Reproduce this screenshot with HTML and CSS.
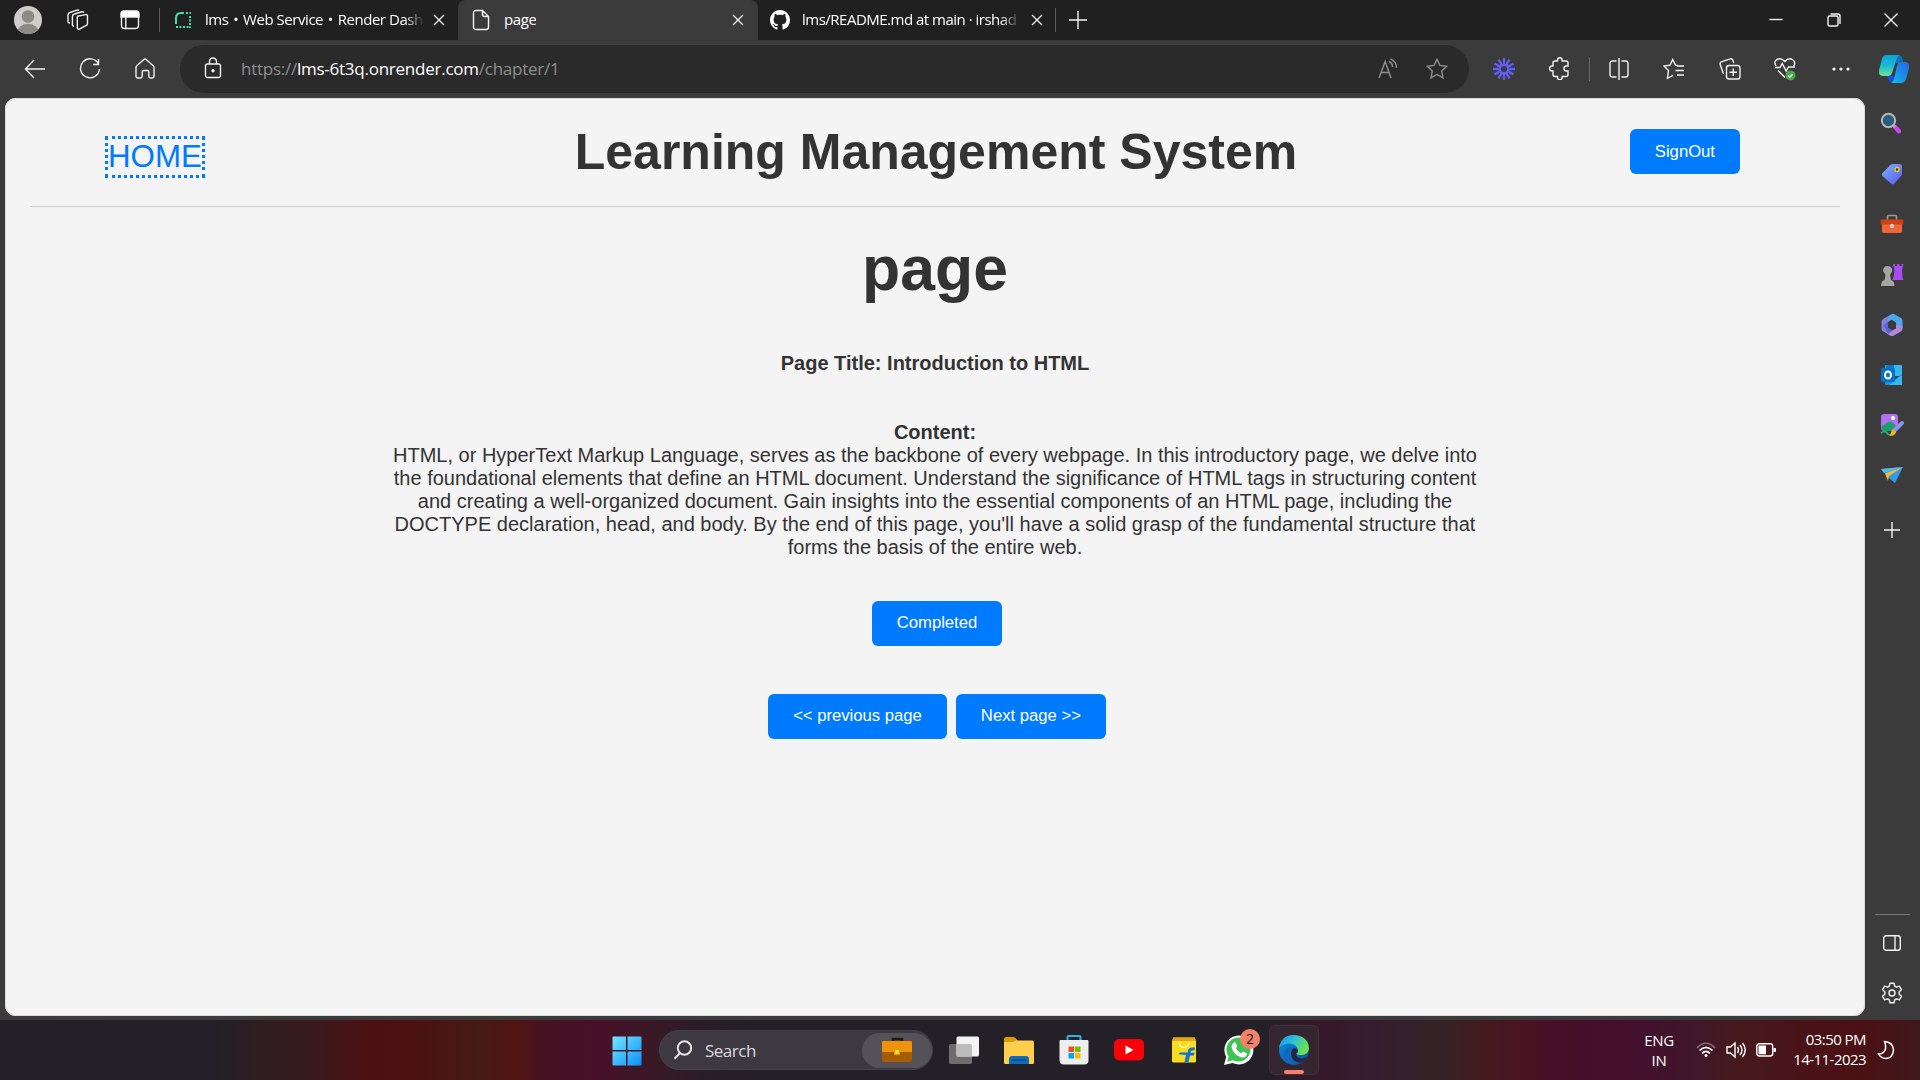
FILE: index.html
```html
<!DOCTYPE html>
<html lang="en">
<head>
<meta charset="utf-8">
<title>page</title>
<link rel="stylesheet" href="styles.css">
</head>
<body>
<div class="desktop">

<header class="tabstrip">
  <div class="slot avatar-slot"><svg width="28" height="28" viewBox="0 0 28 28"><defs><clipPath id="av"><circle cx="14" cy="14" r="14"/></clipPath></defs><g clip-path="url(#av)"><rect width="28" height="28" fill="#cfcdc9"/><circle cx="14" cy="10.5" r="6.3" fill="#8d8a86"/><ellipse cx="14" cy="26" rx="10.5" ry="8.2" fill="#8d8a86"/></g></svg></div>
  <div class="slot spaces-slot"><svg width="22" height="22" viewBox="0 0 22 22" class="line"><path d="M10.5 7.2l8-1.600q2-.3 2 1.600v7.500q0 1.200-1.200 1.700l-7 3.600q-2 .8-2-1.400V8.500q0-1 .2-1.300z"/><path d="M7 17q-1.600.3-1.600-1.300V7.500q0-2 2-2.500l7.500-2.200q1.500-.3 2 .8"/><path d="M3 14q-2 .3-2-1.500V6q0-2 2-2.500L10 1.200q1.500-.4 2 .3"/></svg></div>
  <div class="slot menu-slot"><svg width="20" height="20" viewBox="0 0 20 20" class="line"><rect x="1.500" y="1.500" width="17" height="17" rx="3"/><path d="M1 7V4q0-3 3-3h12q3 0 3 3v3z" fill="#fff"/><path d="M5.800 7v11"/></svg></div>
  <i class="tab-rule"></i>
  <div class="tab tab-render">
    <svg width="16" height="16" viewBox="0 0 16 16" fill="none" stroke="#3fe0b4" stroke-width="2"><path d="M1 12V6Q1 1 6 1h3"/><path d="M11 1h5M15 4v12M1 15h14" stroke-dasharray="2 1.500"/></svg>
    <span class="tab-title fade">lms・Web Service・Render Dash</span>
    <svg class="close" width="12" height="12" viewBox="0 0 12 12"><path d="M1 1l10 10M11 1L1 11"/></svg>
  </div>
  <div class="tab tab-page">
    <svg width="18" height="22" viewBox="0 0 18 22" class="line"><path d="M4 1.500h6.500L16.500 7.500V18q0 2.500-2.500 2.500H4q-2.500 0-2.500-2.500V4Q1.500 1.500 4 1.500zM10.500 1.500V5.500q0 2 2 2h4"/></svg>
    <span class="tab-title">page</span>
    <svg class="close" width="12" height="12" viewBox="0 0 12 12"><path d="M1 1l10 10M11 1L1 11"/></svg>
  </div>
  <div class="tab tab-git">
    <svg width="20" height="20" viewBox="0 0 16 16" fill="#fff"><path d="M8 0C3.580 0 0 3.580 0 8c0 3.540 2.290 6.530 5.470 7.590.4.070.55-.17.55-.38 0-.19-.01-.82-.01-1.490-2.010.37-2.530-.49-2.690-.94-.09-.23-.48-.94-.82-1.130-.28-.15-.68-.52-.01-.53.63-.01 1.080.58 1.230.82.72 1.210 1.870.87 2.330.66.070-.52.28-.87.51-1.070-1.780-.2-3.640-.89-3.640-3.950 0-.87.31-1.590.82-2.150-.08-.2-.36-1.020.08-2.120 0 0 .67-.21 2.200.82.64-.18 1.320-.27 2-.27s1.360.09 2 .27c1.530-1.040 2.200-.82 2.200-.82.44 1.100.16 1.920.08 2.120.51.56.82 1.270.82 2.150 0 3.070-1.870 3.750-3.650 3.950.29.25.54.73.54 1.480 0 1.070-.01 1.930-.01 2.200 0 .21.15.46.55.38A8.010 8.010 0 0 0 16 8c0-4.420-3.580-8-8-8z"/></svg>
    <span class="tab-title fade">lms/README.md at main · irshad</span>
    <svg class="close" width="12" height="12" viewBox="0 0 12 12"><path d="M1 1l10 10M11 1L1 11"/></svg>
  </div>
  <i class="tab-rule"></i>
  <svg class="new-tab line" width="18" height="18" viewBox="0 0 18 18"><path d="M9 0v18M0 9h18"/></svg>
  <div class="window-buttons">
    <div class="slot"><svg width="14" height="14" viewBox="0 0 14 14" class="line"><path d="M.5 6.500h13"/></svg></div>
    <div class="slot"><svg width="14" height="14" viewBox="0 0 14 14" class="line"><rect x="1" y="3" width="10" height="10" rx="1.500"/><path d="M3.500 1H11q2 0 2 2v8"/></svg></div>
    <div class="slot"><svg width="14" height="14" viewBox="0 0 14 14" class="line"><path d="M.5.5l13 13M13.500.5l-13 13"/></svg></div>
  </div>
</header>

<div class="toolbar">
  <div class="nav">
    <div class="slot"><svg width="22" height="20" viewBox="0 0 22 20" class="line"><path d="M10 1L1.500 10l8.500 9M1.500 10H21"/></svg></div>
    <div class="slot"><svg width="22" height="22" viewBox="0 0 22 22" class="line"><path d="M19.500 6A9.500 9.500 0 1 0 20.500 11M19.500 1v5.500H14"/></svg></div>
    <div class="slot"><svg width="20" height="21" viewBox="0 0 20 21" class="line"><path d="M1 9.500q0-1 .8-1.700l7-6.300q1.200-1 2.400 0l7 6.300q.8.700.8 1.700V18q0 2-2 2h-1.500q-1.700 0-1.700-1.700V14q0-1.500-1.500-1.500H8.700Q7.200 12.500 7.200 14v4.300Q7.200 20 5.500 20H3q-2 0-2-2z"/></svg></div>
  </div>
  <div class="address">
    <svg width="18" height="22" viewBox="0 0 18 22" class="line"><rect x="1.500" y="7" width="15" height="13.500" rx="2"/><path d="M5.500 7V4.500a3.500 3.500 0 0 1 7 0V7"/><circle cx="9" cy="13.700" r="1" fill="#fff"/></svg>
    <span class="url"><span class="url-scheme">https://</span><b>lms-6t3q.onrender.com</b><span class="url-path">/chapter/1</span></span>
    <svg class="dim" width="20" height="22" viewBox="0 0 20 22"><path d="M1 20L7.200 3.500 13 20M3.200 14.500h8M11 3.500q3.500 1.500 3.500 5.500M12.500.8q6 2.500 6 9"/></svg>
    <svg class="dim star" width="22" height="22" viewBox="0 0 22 22"><path d="M11 1.200l2.900 6.200 6.800.9-5 4.700 1.300 6.900-6-3.400-6 3.400 1.300-6.900-5-4.700 6.800-.9z"/></svg>
  </div>
  <div class="tools">
    <div class="slot"><svg width="22" height="22" viewBox="-11 -11 22 22" stroke="#625df5" stroke-width="2.300"><path d="M0-4v-7M0 4v7M-4 0h-7M4 0h7M2-3.500l3.500-6M-2-3.500l-3.500-6M2 3.500l3.500 6M-2 3.500l-3.500 6M3.500-2l6-3.500M-3.500-2l-6-3.500M3.500 2l6 3.500M-3.500 2l-6 3.500"/><circle r="4.200" fill="none"/></svg></div>
    <div class="slot"><svg width="21" height="23" viewBox="0 0 21 23" class="line"><path d="M4 6q0-2 2-2h2.500V3a2.300 2.300 0 0 1 4.600 0v1H17q2 0 2 2v3h-1.500a2.400 2.400 0 0 0 0 5H19v3.500q0 2-2 2h-3.900v1a2.300 2.300 0 0 1-4.600 0v-1H6q-2 0-2-2V14H3a2.300 2.300 0 0 1 0-5h1z"/></svg></div>
    <i class="tool-rule"></i>
    <div class="slot"><svg width="20" height="22" viewBox="0 0 20 22" class="line"><path d="M7.500 3H3.500Q1 3 1 5.500v11Q1 19 3.500 19h4M12.500 3h4Q19 3 19 5.500v11q0 2.500-2.500 2.500h-4M10 0v22"/></svg></div>
    <div class="slot"><svg width="22" height="22" viewBox="0 0 22 22" class="line"><path d="M14.500 7.500l-2-.4L9.700 1.500 7 7.100l-6 .9 4.500 4.500-1.100 7.800 5.600-3M14 8h7M12.500 12.500H21M14 17h7"/></svg></div>
    <div class="slot"><svg width="22" height="22" viewBox="0 0 22 22" class="line"><rect x="7.500" y="7.500" width="13.500" height="13.500" rx="2.500"/><path d="M14.200 10.500v7.500M10.500 14.200H18M4.500 16L1.200 6.500Q.7 4.300 2.700 3.600L11.300.9q2-.4 2.700 1.500l.8 2.600"/></svg></div>
    <div class="slot"><svg width="22" height="24" viewBox="0 0 22 24" class="line"><path d="M2 9Q-.5 5 2.500 2.800 6.800.2 10.800 4.500q4-4.300 8-1.700 3.200 2.500 1 6.200M4 13.500l7 7M1 10.500h5l2.200-4 4 7.500 2.300-4h6.500"/><circle cx="16.500" cy="18.500" r="5" fill="#45a849" stroke="none"/><path d="M14.300 18.700l1.500 1.500 2.800-3"/></svg></div>
    <div class="slot"><svg width="18" height="4" viewBox="0 0 18 4" fill="#fff"><circle cx="2" cy="2" r="1.600"/><circle cx="9" cy="2" r="1.600"/><circle cx="16" cy="2" r="1.600"/></svg></div>
    <div class="slot copilot"><svg width="30" height="28" viewBox="0 0 30 28"><defs><linearGradient id="c1" x2="0" y2="1"><stop stop-color="#0ba2df"/><stop offset=".5" stop-color="#19b8d3"/><stop offset="1" stop-color="#6fe193"/></linearGradient><linearGradient id="c2" x1="1" x2="0" y2="1"><stop stop-color="#2c62df"/><stop offset=".6" stop-color="#1598ee"/><stop offset="1" stop-color="#16c7ef"/></linearGradient></defs><path d="M8 21h8l-2 6h-1q-3 0-4-3z" fill="#1b4de0"/><path d="M17 0h3q3 0 3.500 4L24 8h-7z" fill="#0872b8"/><path d="M7 0h14q-2 0-3 3l-5 15q-1 3-4 3H4q-5 0-4-6L3 4q1-4 4-4z" fill="url(#c1)"/><path d="M21 7h5q5 0 4 6l-3 11q-1 4-5 4H11q3 0 4-4l3-13q1-4 3-4z" fill="url(#c2)"/></svg></div>
  </div>
</div>

<div class="browser-body">
  <main class="page">
    <div class="page-head">
      <a class="home">HOME</a>
      <h1>Learning Management System</h1>
      <button class="btn sign-out">SignOut</button>
    </div>
    <h2>page</h2>
    <h3>Page Title: Introduction to HTML</h3>
    <div class="content"><b>Content:</b><br>HTML, or HyperText Markup Language, serves as the backbone of every webpage. In this introductory page, we delve into<br>the foundational elements that define an HTML document. Understand the significance of HTML tags in structuring content<br>and creating a well-organized document. Gain insights into the essential components of an HTML page, including the<br>DOCTYPE declaration, head, and body. By the end of this page, you'll have a solid grasp of the fundamental structure that<br>forms the basis of the entire web.</div>
    <div class="actions"><button class="btn">Completed</button></div>
    <div class="actions pager"><button class="btn">&lt;&lt; previous page</button><button class="btn">Next page &gt;&gt;</button></div>
  </main>

  <aside class="sidebar">
    <div class="side-item"><svg width="24" height="24" viewBox="0 0 24 24"><path d="M15.500 15.500l3.500 3.700" stroke="#c44bf5" stroke-width="4.500" stroke-linecap="round"/><path d="M12 12l3 3" stroke="#aaa" stroke-width="3"/><circle cx="8.500" cy="8.500" r="6.700" fill="#23617f" stroke="#b9b7b5" stroke-width="2"/></svg></div>
    <div class="side-item"><svg width="24" height="24" viewBox="0 0 24 24"><defs><linearGradient id="tg" x2="1" y2="1"><stop stop-color="#7cb6fb"/><stop offset="1" stop-color="#5a55f0"/></linearGradient></defs><path d="M12.500 2H20q2 0 2 2v8q0 1-.8 1.800l-7 8Q12.500 23 11 21.500L2.500 14Q1 12.500 2.500 11l8-8.200Q11.300 2 12.500 2z" fill="url(#tg)"/><circle cx="17" cy="7.500" r="2" fill="#333" stroke="#f6c520" stroke-width="1.500"/></svg></div>
    <div class="side-item"><svg width="24" height="20" viewBox="0 0 24 20"><path d="M7.500 6V3q0-1.500 1.500-1.500h6q1.500 0 1.500 1.500v3" fill="none" stroke="#999" stroke-width="1.700"/><rect x="2" y="7" width="20" height="12" rx="2" fill="#ef6537"/><rect x=".8" y="5.500" width="22.400" height="5" rx="1" fill="#d2410f"/><circle cx="12" cy="12" r="2.200" fill="#ccc"/></svg></div>
    <div class="side-item"><svg width="24" height="24" viewBox="0 0 24 24"><path d="M13 1h2v2h2V1h2.500v2h2V1h2l-1.500 6 .5 7 1 3H12.500l1.500-5 .5-5z" fill="#a84df5"/><path d="M8 3a4.200 4.200 0 0 1 3 7.200L10 12l1 5q3.500 1 3.500 6H1q0-5 3.500-6l1-5-1-1.800A4.200 4.200 0 0 1 8 3z" fill="#a6a5a4"/></svg></div>
    <div class="side-item"><svg width="24" height="24" viewBox="0 0 24 24"><path d="M12 1L3 6Q1.500 7 1.500 8.500v7.500q0 1.500 1.300 2.300L8 21V9l6-4z" fill="#8580dd"/><path d="M12 1q1-.5 2 0l7 4q1.500 1 1.500 2.500V15L16 11.500V9.500L11.500 6.500 8 8.500V4z" fill="#49a9ec"/><path d="M22.500 13v3q0 1.500-1.300 2.300L14 22.500q-2 1-4 0l-3.500-2L16 15.500v-4z" fill="#b288dd"/><path d="M8 21l-4.500-9L8 8.500V14.500l4.500 3z" fill="#5a64cc"/></svg></div>
    <div class="side-item"><svg width="22" height="22" viewBox="0 0 22 22"><path d="M5 1h15q1 0 1 1v10H4V2q0-1 1-1z" fill="#35b8f1"/><path d="M5 2q0-1 1-1h7v6H5z" fill="#0a7ad1"/><path d="M4 20V11l9 5 8-6v10q0 1-1 1H5q-1 0-1-1z" fill="#1594df"/><path d="M8 21L21 11v10z" fill="#32b7ee"/><rect y="4" width="14" height="14" rx="1.500" fill="#0872c9"/><ellipse cx="7" cy="11" rx="3" ry="3.600" fill="none" stroke="#fff" stroke-width="2"/></svg></div>
    <div class="side-item"><svg width="24" height="24" viewBox="0 0 24 24"><rect x="1" y="1" width="17" height="17" rx="3" fill="#b271ef"/><path d="M1 14l7-5q2-1 4 0l4 4-5 5H3z" fill="#1d9f68"/><circle cx="13" cy="5" r="2" fill="#fff"/><path d="M1 20q4-3 6 0t4 1" fill="none" stroke="#28b87b" stroke-width="1.700"/><path d="M22 10l-8 8" stroke="#8d90ee" stroke-width="4" stroke-linecap="round"/><path d="M13 16l3 3q-1 4-6 4 1-5 3-7z" fill="#f6b21b"/></svg></div>
    <div class="side-item"><svg width="24" height="18" viewBox="0 0 24 18"><path d="M1 3l22-2-8 16-6-5z" fill="#2f9bee"/><path d="M1 3l22-2L4 7z" fill="#55b6f6"/><path d="M5 7.500L23 1 9 10l-1 5z" fill="#fbbb1f"/></svg></div>
    <svg class="add line" width="16" height="16" viewBox="0 0 16 16"><path d="M8 0v16M0 8h16"/></svg>
    <i class="side-rule"></i>
    <svg class="panel line" width="18" height="16" viewBox="0 0 18 16"><rect x=".7" y=".7" width="16.600" height="14.600" rx="2.500"/><path d="M12 1v14"/></svg>
    <svg class="line" width="22" height="22" viewBox="0 0 22 22"><path d="M9 1.200h4l.7 3 1.700 1 3-1 2 3.500-2.300 2.200v2.200l2.300 2.200-2 3.500-3-1-1.700 1-.7 3H9l-.7-3-1.700-1-3 1-2-3.500 2.300-2.200V9.900L1.600 7.700l2-3.500 3 1 1.700-1z" stroke-linejoin="round"/><circle cx="11" cy="11" r="3"/></svg>
  </aside>
</div>

<footer class="taskbar">
  <div class="apps">
    <svg class="start" width="30" height="30" viewBox="0 0 30 30"><defs><linearGradient id="wn" x2="1" y2="1"><stop stop-color="#74e6ff"/><stop offset="1" stop-color="#0a90fa"/></linearGradient></defs><path d="M1.500.5H14v13.500H.5v-12.500q0-1 1-1zM15.500.5H28.500q1 0 1 1V14h-14zM.5 15.500H14v14H1.500q-1 0-1-1zM15.500 15.500h14v13q0 1-1 1h-13z" fill="url(#wn)"/></svg>
    <div class="search">
      <svg width="20" height="20" viewBox="0 0 20 20" fill="none" stroke="#e6e4e6" stroke-width="2"><circle cx="11.500" cy="8" r="6.700"/><path d="M7 13l-5.500 5.700"/></svg>
      <span>Search</span>
      <div class="highlight"><svg width="30" height="26" viewBox="0 0 30 26"><path d="M11 4V2h9v2" fill="none" stroke="#1d1a18" stroke-width="2.500"/><rect y="4" width="30" height="21" rx="2" fill="#a65b05"/><path d="M0 15V5q0-1 1-1h28q1 0 1 1v10z" fill="#ef920c"/><rect x="12.500" y="12.500" width="5" height="5" fill="#ffe12c" stroke="#d99a00"/></svg></div>
    </div>
    <div class="app"><svg width="30" height="28" viewBox="0 0 30 28"><rect x="0" y="8" width="23" height="20" rx="1.500" fill="#6d6c6e"/><rect x="7.500" y=".5" width="22.500" height="20" rx="1.500" fill="#f3f3f3"/><path d="M7.500 8H21.500q1.500 0 1.500 1.500V20.500H9q-1.500 0-1.500-1.500z" fill="#bdbcbd"/></svg></div>
    <div class="app"><svg width="30" height="27" viewBox="0 0 30 27"><path d="M0 2q0-2 2-2h7q2 0 3 1.500l2 2.500h14v8H0z" fill="#dc9a0a"/><path d="M0 6q0-1 1-1h8l3-1.500h16q2 0 2 2V26q0 1-1 1H1q-1 0-1-1z" fill="#ffcf4b"/><path d="M5 27v-5q0-3 3-3h14q3 0 3 3v5z" fill="#0f6cbd"/><path d="M8 23h14" stroke="#084a87" stroke-width="1.500"/></svg></div>
    <div class="app"><svg width="30" height="30" viewBox="0 0 30 30"><path d="M8.500 7V2q0-1 1-1h11q1 0 1 1v5" fill="none" stroke="#2bb2ea" stroke-width="2"/><path d="M1.500 5h27q1 0 1 1v19q0 4.500-4.500 4.500H5Q.5 29.500.5 25V6q0-1 1-1z" fill="#eee"/><path d="M9.500 11.500H15V17H9.500z" fill="#f25022"/><path d="M16 11.500h5.500V17H16z" fill="#7fba00"/><path d="M9.500 18H15v5.500H9.500z" fill="#00a4ef"/><path d="M16 18h5.500v5.500H16z" fill="#ffb900"/></svg></div>
    <div class="app"><svg width="30" height="22" viewBox="0 0 30 22"><rect width="30" height="21.500" rx="5" fill="#fb0007"/><path d="M11.500 6.500l8 4.500-8 4.500z" fill="#fff"/></svg></div>
    <div class="app"><svg width="26" height="26" viewBox="0 0 26 26"><path d="M2.500.5h21L25 4v20q0 1.500-1.500 1.500h-21Q1 25.500 1 24V4z" fill="#f7dc20"/><path d="M2.500.5h21L25 4H1z" fill="#e7a315"/><path d="M7.500 4.500q1 6 5.500 6t5.500-6" fill="none" stroke="#fff3a4" stroke-width="1.500"/><path d="M24 10.500h-3q-3 0-4 3l-.5 2H9l-1.500 1.700L15 18l-1.500 7h4l1.500-6.500h4l.7-2.700H19.500l.3-1.300q.3-1 1.700-1h2z" fill="#1672d2"/></svg></div>
    <div class="app"><svg width="30" height="30" viewBox="0 0 30 30"><path d="M0 30l2.200-8A14.500 14.500 0 1 1 8.500 28z" fill="#fff"/><path d="M3.200 26.800l1.500-5.200A12 12 0 1 1 9 25.300z" fill="#3fc351"/><path d="M10 7.500q1.200-.7 1.800.5l1.300 3q.3.800-1.200 2.200 2 3.800 5.300 5.200 1.600-2.200 2.400-1.700l3 1.500q.8.500 0 2-1.500 2.800-4.500 2.300Q9.500 20.700 7.500 12q0-3 2.500-4.500z" fill="#fff"/></svg><span class="badge">2</span></div>
    <div class="app active"><svg width="30" height="30" viewBox="0 0 30 30"><defs><linearGradient id="e1" x2="1" y2=".4"><stop stop-color="#1a8be0"/><stop offset=".5" stop-color="#2dbfdc"/><stop offset="1" stop-color="#69e34f"/></linearGradient><linearGradient id="e2" x2="1" y2="1"><stop stop-color="#118ce6"/><stop offset="1" stop-color="#0a4d9c"/></linearGradient></defs><circle cx="15" cy="15" r="15" fill="url(#e2)"/><path d="M0 13Q2 0 15 0q14 1 15 13-.5 6.500-7 7-5 .5-5.500-1.500 2-1.500 1.500-4Q17.500 9 10 8.500 3 9 0 13z" fill="url(#e1)"/><path d="M17 18.500q0 4 4.500 4.800 3.500.7 7-1.300-2 4-5.500 5.300-6 1-9.500-3.300-3.500-6 1-11 4 .3 4.500 3 .2 1-2 2.500z" fill="#252441"/><path d="M13 14q-4 3-2.500 8.500 2 6 8 7-9 1.500-13-6.500Q3 15 10 12.500q3-1 3 1.500z" fill="#1266bb"/></svg></div>
  </div>
  <div class="tray">
    <div class="lang">ENG<br>IN</div>
    <svg class="wifi" width="20" height="16" viewBox="0 0 20 16" fill="none" stroke="#fff" stroke-width="1.700"><path d="M1 6Q10-3.500 19 6" stroke="#86696f"/><path d="M3.500 8.500q6.500-6.500 13 0M6.200 11.300q3.800-3.800 7.600 0"/><circle cx="10" cy="13.500" r="1.500" fill="#fff" stroke="none"/></svg>
    <svg class="sound" width="20" height="18" viewBox="0 0 20 18" fill="none" stroke="#fff" stroke-width="1.400"><path d="M1 6h3.500L9 2v14l-4.500-4H1zM11.500 6q2 3 0 6M14 4q4 5 0 10M16.500 2q5.500 7 0 14"/></svg>
    <svg class="battery" width="20" height="14" viewBox="0 0 20 14"><rect x=".8" y=".8" width="15.900" height="12.200" rx="2.500" fill="none" stroke="#fff" stroke-width="1.400"/><rect x="2.500" y="2.500" width="7.500" height="8.800" fill="#fff"/><path d="M17.500 5H19q1 0 1 1v2q0 1-1 1h-1.500z" fill="#fff"/></svg>
    <div class="clock">03:50 PM<br>14-11-2023</div>
    <svg width="18" height="20" viewBox="0 0 18 20" fill="none" stroke="#fff" stroke-width="1.500"><path d="M7.500 1.500Q16 2 16.500 10q-.7 8-7.500 8.500-5 0-7.500-4.500 4.500 0 6.500-3.500 1.500-4-.5-9z"/></svg>
  </div>
</footer>
</div>
</body>
</html>
```
FILE: styles.css
```css
* { box-sizing: border-box; }
body { margin: 0; background: #3b3b3b; overflow: hidden; }
svg { display: block; flex: none; }

.desktop {
  width: 1920px;
  height: 1080px;
  display: flex;
  flex-direction: column;
  background: #3b3b3b;
  font-family: "Open Sans", "Noto Sans", "Noto Sans CJK JP", sans-serif;
  color: #fff;
}
.slot { display: flex; justify-content: center; align-items: center; flex: none; }
.line { fill: none; stroke: #f2f2f2; stroke-width: 1.4; }

/* tab strip */
.tabstrip { height: 40px; flex: none; display: flex; align-items: center; background: #202020; }
.avatar-slot { width: 56px; }
.spaces-slot { width: 44px; }
.menu-slot { width: 59px; }
.tab-rule { width: 1px; height: 24px; background: #5c5c5c; flex: none; }
.tab { height: 40px; display: flex; align-items: center; font-size: 15px; flex: none; }
.tab-title { white-space: nowrap; overflow: hidden; line-height: 24px; flex: none; padding-bottom: 2px; }
.fade { -webkit-mask-image: linear-gradient(90deg, #000 91%, transparent); mask-image: linear-gradient(90deg, #000 91%, transparent); }
.close { margin-left: auto; fill: none; stroke: #eee; stroke-width: 1.3; }
.tab-render { width: 298px; padding: 0 13px 0 15px; }
.tab-render .tab-title { margin-left: 14px; width: 219px; letter-spacing: -.45px; }
.tab-page { width: 300px; padding: 0 14px 0 14px; background: #3b3b3b; border-radius: 8px 8px 0 0; }
.tab-page .tab-title { margin-left: 14px; letter-spacing: -.4px; }
.tab-git { width: 297px; padding: 0 12px 0 12px; }
.tab-git .tab-title { margin-left: 12px; width: 218px; letter-spacing: -.5px; }
.new-tab { margin-left: 13px; }
.window-buttons { margin-left: auto; display: flex; }
.window-buttons .slot { width: 57.5px; }

/* toolbar */
.toolbar { height: 58px; flex: none; display: flex; align-items: center; padding-bottom: 1px; }
.nav { display: flex; padding: 0 8px 0 7px; }
.nav .slot { width: 55px; }
.address {
  width: 1289px;
  height: 48px;
  border-radius: 24px;
  background: #2a2a2a;
  display: flex;
  align-items: center;
  padding: 0 20px 0 24px;
}
.address .line { margin-top: -1px; }
.url { margin: 0 auto 0 19px; font-size: 17px; letter-spacing: -.25px; color: #8f8f8f; white-space: nowrap; }
.url b { font-weight: 400; color: #fff; }
.dim { fill: none; stroke: #8f8f8f; stroke-width: 1.4; }
.star { margin-left: 28px; margin-right: 1px; }
.tools { display: flex; align-items: center; padding-left: 7px; }
.tools .slot { width: 55.5px; }
.tool-rule { width: 1px; height: 24px; background: #666; margin: 0 1px 0 2px; }
.tools .copilot { width: 50px; }

/* browser body */
.browser-body { flex: 1; display: flex; min-height: 0; padding: 0 0 4px 5px; }
.page {
  width: 1860px;
  background: #f4f4f4;
  border-radius: 11px;
  padding: 0 25px;
  font-family: "Liberation Sans", Arial, sans-serif;
  color: #333;
  text-align: center;
  box-shadow: inset 0 0 0 1px #dcdcdc;
}
.page-head {
  height: 109px;
  border-bottom: 1px solid #ccc;
  display: flex;
  padding: 31px 100px 0 75px;
}
.home {
  height: 42px;
  margin-top: 7px;
  border: 3px dotted #007bff;
  color: #007bff;
  font-size: 31.25px;
  line-height: 36px;
}
.page h1 { margin: -6px auto 0 370px; font-size: 50px; line-height: 58px; }
.page h2 { margin: 25px 0 0; font-size: 62.5px; line-height: 72px; }
.page h3 { margin: 48px 0 0; font-size: 20px; line-height: 23px; }
.content { margin-top: 46px; font-size: 20px; line-height: 23px; white-space: nowrap; }
.btn {
  height: 45px;
  padding: 0 25px 2px;
  border: 0;
  border-radius: 6px;
  background: #007bff;
  color: #fff;
  font: 16.67px "Liberation Sans", Arial, sans-serif;
}
.sign-out { padding-bottom: 0; }
.actions { margin-top: 42px; padding-left: 4px; display: flex; justify-content: center; gap: 9px; }
.pager { margin-top: 48px; }

/* sidebar */
.sidebar { width: 55px; display: flex; flex-direction: column; align-items: center; padding: 1px 1px 12px 0; }
.side-item { height: 50.2px; display: flex; align-items: center; flex: none; }
.add { margin-top: 21px; }
.side-rule { width: 35px; height: 1px; background: #777; margin: auto 0 20px; }
.panel { margin-bottom: 31px; }

/* taskbar */
.taskbar {
  height: 60px;
  flex: none;
  display: flex;
  align-items: center;
  background: linear-gradient(90deg, #232027 0, #241f27 215px, #301e21 268px, #3a1a1d 318px, #451518 345px, #4d1012 372px, #4d1112 405px, #481613 440px, #461b13 480px, #511413 518px, #451323 545px, #481129 600px, #3a1826 650px, #2b1d27 700px, #232027 760px, #232027 1260px, #36192a 1320px, #351d2f 1375px, #342428 1435px, #431b1e 1482px, #4b1223 1525px, #440f29 1575px, #43102e 1640px, #40162b 1690px, #451a1d 1735px, #4a1318 1800px, #4a1114 1860px, #40181b 1920px);
}
.apps { display: flex; align-items: center; padding-left: 612px; height: 60px; }
.start { margin-top: 1px; }
.search {
  width: 274px;
  height: 40px;
  margin: 0 3px 0 17px;
  border-radius: 20px;
  background: #3d3940;
  border: 1px solid #454148;
  display: flex;
  align-items: center;
  padding-left: 13px;
  font-size: 17px;
  color: #dcdadc;
}
.search span { margin-left: 12px; letter-spacing: -.5px; }
.highlight { width: 70px; height: 35px; border-radius: 18px; background: #555158; margin-left: auto; display: flex; align-items: center; justify-content: center; }
.app { position: relative; width: 55px; height: 50px; display: flex; align-items: center; justify-content: center; flex: none; }
.active { width: 50px; margin-left: 3px; border-radius: 6px; background: #35252f; border: 1px solid #42323b; }
.active::after { content: ""; position: absolute; left: 14px; bottom: 0; width: 20px; height: 4px; border-radius: 2px; background: #f5816a; }
.badge {
  position: absolute;
  left: 29px;
  top: 4px;
  width: 20px;
  height: 20px;
  border-radius: 50%;
  background: #f5816a;
  color: #111;
  font-size: 14px;
  line-height: 20px;
  text-align: center;
}
.tray { margin-left: auto; padding-right: 25px; display: flex; align-items: center; font-size: 15px; line-height: 20px; }
.lang { width: 50px; text-align: center; letter-spacing: -.3px; padding-bottom: 1px; }
.wifi { margin-left: 12px; }
.sound { margin-left: 10px; }
.battery { margin-left: 10px; }
.clock { width: 90px; text-align: right; letter-spacing: -.55px; margin-right: 11px; white-space: nowrap; padding-bottom: 2px; }
```
